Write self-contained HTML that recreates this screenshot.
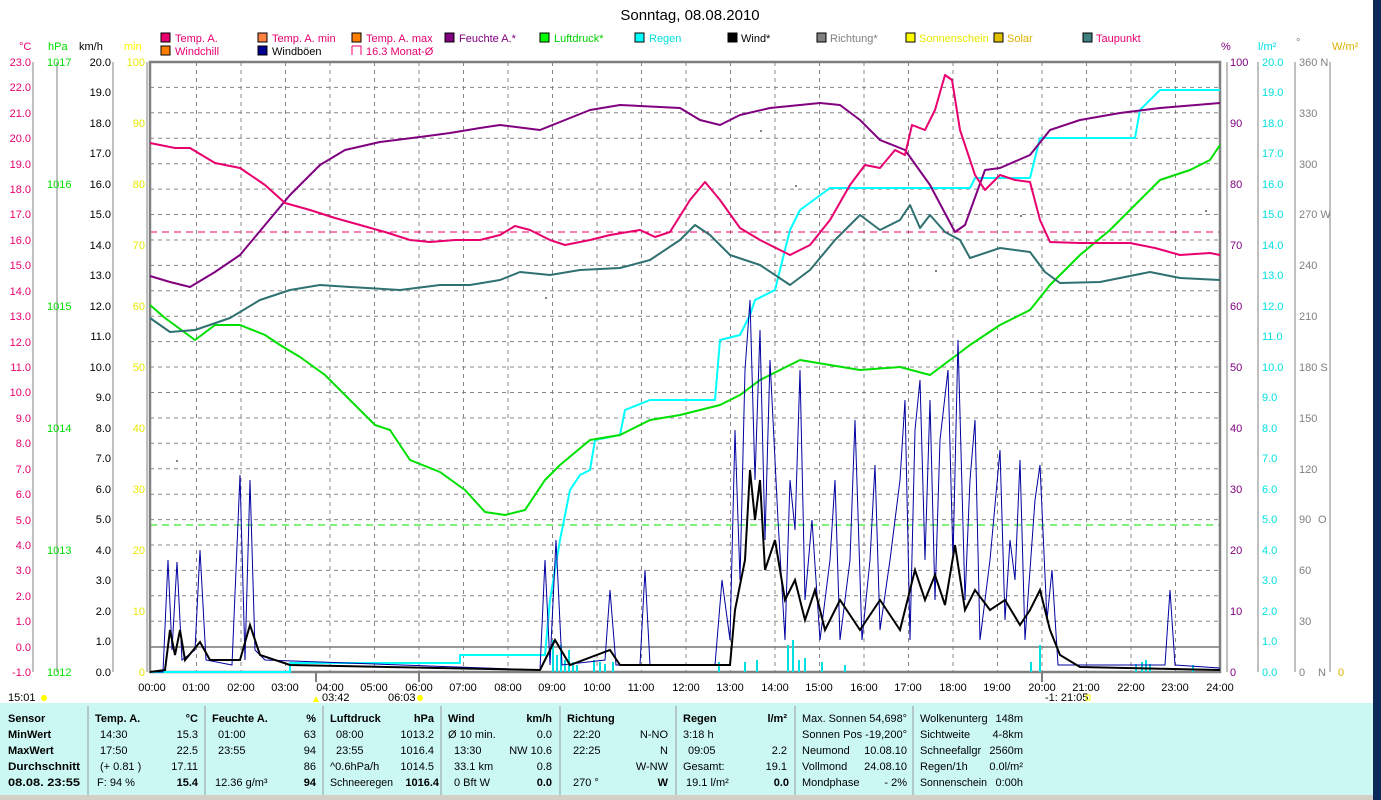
<!DOCTYPE html>
<html><head><meta charset="utf-8"><style>
body{margin:0;width:1381px;height:800px;overflow:hidden;background:#fff;font-family:"Liberation Sans",sans-serif}
svg{position:absolute;left:0;top:0}
</style></head><body>
<svg width="1381" height="800" viewBox="0 0 1381 800" font-family="Liberation Sans, sans-serif" font-size="11">
<rect x="1373" y="0" width="8" height="800" fill="#0b2a5a"/>
<text x="690" y="20" font-size="15" text-anchor="middle">Sonntag, 08.08.2010</text>
<g font-size="11">
<rect x="161" y="33" width="9" height="9" fill="#e8006e" stroke="#000"/><text x="175" y="42" fill="#e8006e">Temp. A.</text>
<rect x="161" y="46" width="9" height="9" fill="#ff8000" stroke="#000"/><text x="175" y="55" fill="#e8006e">Windchill</text>
<rect x="258" y="33" width="9" height="9" fill="#ff8040" stroke="#000"/><text x="272" y="42" fill="#e8006e">Temp. A. min</text>
<rect x="258" y="46" width="9" height="9" fill="#000090" stroke="#000"/><text x="272" y="55">Windböen</text>
<rect x="352" y="33" width="9" height="9" fill="#ff8000" stroke="#000"/><text x="366" y="42" fill="#e8006e">Temp. A. max</text>
<path d="M352 46v9M352 46h9v9" stroke="#e8006e" fill="none"/><text x="366" y="55" fill="#e8006e">16.3 Monat-Ø</text>
<rect x="445" y="33" width="9" height="9" fill="#800080" stroke="#000"/><text x="459" y="42" fill="#800080">Feuchte A.*</text>
<rect x="540" y="33" width="9" height="9" fill="#00ff00" stroke="#000"/><text x="554" y="42" fill="#00d000">Luftdruck*</text>
<rect x="635" y="33" width="9" height="9" fill="#00ffff" stroke="#000"/><text x="649" y="42" fill="#00e0e0">Regen</text>
<rect x="728" y="33" width="9" height="9" fill="#000" stroke="#000"/><text x="741" y="42">Wind*</text>
<rect x="817" y="33" width="9" height="9" fill="#808080" stroke="#000"/><text x="830" y="42" fill="#808080">Richtung*</text>
<rect x="906" y="33" width="9" height="9" fill="#ffff00" stroke="#000"/><text x="919" y="42" fill="#e8e800">Sonnenschein</text>
<rect x="994" y="33" width="9" height="9" fill="#e0c000" stroke="#000"/><text x="1007" y="42" fill="#e0b000">Solar</text>
<rect x="1083" y="33" width="9" height="9" fill="#408080" stroke="#000"/><text x="1096" y="42" fill="#e8006e">Taupunkt</text>
</g>
<text x="19" y="50" fill="#e8006e">°C</text><text x="48" y="50" fill="#00e000">hPa</text><text x="79" y="50">km/h</text><text x="124" y="50" fill="#ffff00">min</text>
<text x="1221" y="50" fill="#800080">%</text><text x="1258" y="50" fill="#00e0e0">l/m²</text><text x="1296" y="46" fill="#808080">°</text><text x="1332" y="50" fill="#e0b000">W/m²</text>
<g stroke="#888" stroke-dasharray="4,4" stroke-width="1">
<path d="M150 87.4H1220M150 112.8H1220M150 138.3H1220M150 163.7H1220M150 189.1H1220M150 214.5H1220M150 240H1220M150 265.4H1220M150 290.8H1220M150 316.2H1220M150 341.6H1220M150 367H1220M150 392.5H1220M150 418H1220M150 443.3H1220M150 468.7H1220M150 494.2H1220M150 519.6H1220M150 545H1220M150 570.4H1220M150 595.8H1220M150 621.3H1220"/>
<path d="M196.5 62V672M241 62V672M285.5 62V672M330 62V672M374.5 62V672M419 62V672M463.5 62V672M508 62V672M552.5 62V672M597 62V672M641.5 62V672M686 62V672M730.5 62V672M775 62V672M819.5 62V672M864 62V672M908.5 62V672M953 62V672M997.5 62V672M1042 62V672M1086.5 62V672M1131 62V672M1175.5 62V672"/>
</g>
<path d="M150 647H1220" stroke="#777" stroke-width="1.5"/>
<path d="M150 232H1220" stroke="#e8006e" stroke-dasharray="7,5"/>
<path d="M150 525H1220" stroke="#00e000" stroke-dasharray="7,5"/>
<rect x="150" y="62" width="1070" height="610" fill="none" stroke="#808080" stroke-width="2.5"/>
<g stroke="#808080" fill="none">
<path d="M33 62V672M57 62V672M113 62V672M147 62V672M1227 62V672M1258 62V672M1295 62V672M1330 62V672"/>
</g>
<g fill="#e8006e" text-anchor="end">
<text x="31" y="66">23.0</text><text x="31" y="91">22.0</text><text x="31" y="117">21.0</text><text x="31" y="142">20.0</text><text x="31" y="168">19.0</text><text x="31" y="193">18.0</text><text x="31" y="218">17.0</text><text x="31" y="244">16.0</text><text x="31" y="269">15.0</text><text x="31" y="295">14.0</text><text x="31" y="320">13.0</text><text x="31" y="346">12.0</text><text x="31" y="371">11.0</text><text x="31" y="396">10.0</text><text x="31" y="422">9.0</text><text x="31" y="447">8.0</text><text x="31" y="473">7.0</text><text x="31" y="498">6.0</text><text x="31" y="524">5.0</text><text x="31" y="549">4.0</text><text x="31" y="574">3.0</text><text x="31" y="600">2.0</text><text x="31" y="625">1.0</text><text x="31" y="651">0.0</text><text x="31" y="676">-1.0</text>
</g>
<g fill="#00e000">
<text x="47" y="66">1017</text><text x="47" y="188">1016</text><text x="47" y="310">1015</text><text x="47" y="432">1014</text><text x="47" y="554">1013</text><text x="47" y="676">1012</text>
</g>
<g text-anchor="end">
<text x="111" y="66">20.0</text><text x="111" y="96">19.0</text><text x="111" y="127">18.0</text><text x="111" y="157">17.0</text><text x="111" y="188">16.0</text><text x="111" y="218">15.0</text><text x="111" y="249">14.0</text><text x="111" y="279">13.0</text><text x="111" y="310">12.0</text><text x="111" y="340">11.0</text><text x="111" y="371">10.0</text><text x="111" y="401">9.0</text><text x="111" y="432">8.0</text><text x="111" y="462">7.0</text><text x="111" y="493">6.0</text><text x="111" y="523">5.0</text><text x="111" y="554">4.0</text><text x="111" y="584">3.0</text><text x="111" y="615">2.0</text><text x="111" y="645">1.0</text><text x="111" y="676">0.0</text>
</g>
<g fill="#e8e800" text-anchor="end">
<text x="145" y="66">100</text><text x="145" y="127">90</text><text x="145" y="188">80</text><text x="145" y="249">70</text><text x="145" y="310">60</text><text x="145" y="371">50</text><text x="145" y="432">40</text><text x="145" y="493">30</text><text x="145" y="554">20</text><text x="145" y="615">10</text><text x="145" y="676">0</text>
</g>
<g fill="#800080">
<text x="1230" y="66">100</text><text x="1230" y="127">90</text><text x="1230" y="188">80</text><text x="1230" y="249">70</text><text x="1230" y="310">60</text><text x="1230" y="371">50</text><text x="1230" y="432">40</text><text x="1230" y="493">30</text><text x="1230" y="554">20</text><text x="1230" y="615">10</text><text x="1230" y="676">0</text>
</g>
<g fill="#00e0e0">
<text x="1262" y="66">20.0</text><text x="1262" y="96">19.0</text><text x="1262" y="127">18.0</text><text x="1262" y="157">17.0</text><text x="1262" y="188">16.0</text><text x="1262" y="218">15.0</text><text x="1262" y="249">14.0</text><text x="1262" y="279">13.0</text><text x="1262" y="310">12.0</text><text x="1262" y="340">11.0</text><text x="1262" y="371">10.0</text><text x="1262" y="401">9.0</text><text x="1262" y="432">8.0</text><text x="1262" y="462">7.0</text><text x="1262" y="493">6.0</text><text x="1262" y="523">5.0</text><text x="1262" y="554">4.0</text><text x="1262" y="584">3.0</text><text x="1262" y="615">2.0</text><text x="1262" y="645">1.0</text><text x="1262" y="676">0.0</text>
</g>
<g fill="#808080">
<text x="1299" y="66">360 N</text><text x="1299" y="117">330</text><text x="1299" y="168">300</text><text x="1299" y="218">270 W</text><text x="1299" y="269">240</text><text x="1299" y="320">210</text><text x="1299" y="371">180 S</text><text x="1299" y="422">150</text><text x="1299" y="473">120</text><text x="1299" y="523">90</text><text x="1318" y="523">O</text><text x="1299" y="574">60</text><text x="1299" y="625">30</text><text x="1299" y="676">0</text><text x="1318" y="676">N</text>
</g>
<text x="1338" y="676" fill="#e0b000">0</text>
<g stroke="#00e0e0" stroke-width="2">
<path d="M553 672V640M557 672V655M561 672V645M565 672V660M569 672V650M573 672V662M577 672V665M594 672V660M600 672V662M605 672V664M613 672V662M719 672V662M745 672V662M757 672V660M788 672V645M793 672V640M799 672V660M805 672V658M822 672V662M845 672V665M1031 672V662M1040 672V645M1136 672V664M1142 672V662M1146 672V660M1150 672V664M1193 672V665"/>
</g>
<g fill="none" stroke-width="2" stroke-linejoin="round">
<polyline stroke="#00ffff" points="150,672 290,672 290,663 460,663 460,655 545,655 550,600 560,540 570,490 580,475 590,470 595,440 620,435 625,410 650,400 715,400 720,340 740,335 750,315 755,300 775,290 790,230 800,210 830,188 970,188 975,178 1030,178 1040,138 1135,138 1140,110 1160,90 1220,90"/>
<polyline stroke="#00e000" points="150,305 165,318 195,340 215,325 240,325 265,335 280,345 300,357 325,375 350,400 375,425 390,430 410,460 440,472 465,490 485,512 505,515 525,510 545,480 560,465 590,440 620,435 650,420 680,415 700,410 720,405 740,395 760,380 780,370 800,360 830,365 860,370 900,367 930,375 950,360 970,345 1000,325 1030,310 1050,285 1080,255 1110,230 1140,200 1160,180 1190,170 1210,160 1220,145"/>
<polyline stroke="#800080" points="150,276 170,282 190,287 215,272 240,255 265,225 290,195 320,165 345,150 380,142 420,137 450,133 480,128 500,125 540,130 560,122 590,110 620,105 680,108 700,120 720,125 740,115 770,108 820,103 840,105 860,120 880,140 905,150 930,185 955,232 965,225 985,170 1000,168 1030,155 1050,130 1080,120 1120,113 1160,108 1220,103"/>
<polyline stroke="#2f7070" points="150,318 170,332 195,330 230,318 260,300 290,290 320,285 350,287 400,290 440,285 470,285 500,280 520,272 550,275 580,270 620,268 650,260 680,240 695,225 710,235 730,255 760,265 790,285 810,270 835,240 860,215 880,230 900,220 910,205 920,228 930,215 945,232 960,240 970,258 1000,248 1030,252 1045,272 1060,283 1100,282 1150,272 1180,278 1220,280"/>
<polyline stroke="#e8006e" points="150,143 175,148 190,148 215,163 240,168 265,185 285,203 310,210 335,218 360,225 385,232 410,240 430,242 455,240 480,240 500,235 515,226 530,230 550,240 565,245 590,240 610,235 640,230 655,237 670,232 690,200 705,182 720,200 740,228 760,240 790,255 810,245 830,220 850,185 865,165 880,168 895,150 905,155 912,125 925,130 935,110 945,75 952,80 960,130 975,175 985,190 1000,175 1015,180 1030,182 1040,220 1050,242 1080,243 1130,243 1155,248 1180,255 1210,253 1220,255"/>
</g>
<g fill="none" stroke-width="1" stroke="#0000a0">
<polyline points="150,672 163,672 168,560 172,650 177,562 182,660 195,650 200,550 206,660 232,665 240,475 245,660 250,480 255,650 265,660 540,670 545,560 550,665 556,540 562,665 605,660 610,590 616,665 640,665 645,570 650,665 715,665 722,580 730,640 735,430 740,580 745,370 750,300 755,480 760,330 765,540 770,360 778,520 785,640 790,480 795,530 800,370 805,600 812,520 820,640 830,560 835,480 840,640 850,560 855,420 862,640 870,560 875,465 880,630 890,560 900,480 905,400 910,640 915,430 920,380 925,560 930,400 935,600 940,440 948,370 953,560 958,340 965,600 970,480 975,420 980,640 990,560 1000,450 1005,620 1010,540 1015,580 1020,460 1025,640 1035,500 1040,465 1047,620 1052,570 1058,665 1165,665 1170,590 1175,665 1220,668"/>
</g>
<g fill="none" stroke-width="2" stroke="#000">
<polyline points="150,672 165,670 170,630 175,655 180,630 185,660 200,642 210,660 240,660 250,625 260,655 290,665 540,670 555,640 570,665 610,650 620,665 730,665 735,610 745,560 750,470 755,520 760,480 765,570 775,540 785,600 795,580 805,620 815,590 825,630 840,600 860,630 880,600 900,630 915,570 925,600 935,575 945,605 955,545 965,610 975,590 990,610 1005,600 1020,625 1030,610 1040,590 1050,630 1060,655 1080,667 1220,670"/>
</g>
<g fill="#808080"><rect x="176" y="460" width="2" height="2"/><rect x="545" y="297" width="2" height="2"/><rect x="760" y="130" width="2" height="2"/><rect x="795" y="185" width="2" height="2"/><rect x="935" y="270" width="2" height="2"/><rect x="1020" y="215" width="2" height="2"/><rect x="1205" y="210" width="2" height="2"/></g>
<g text-anchor="middle">
<text x="152" y="691">00:00</text><text x="196" y="691">01:00</text><text x="241" y="691">02:00</text><text x="285" y="691">03:00</text><text x="330" y="691">04:00</text><text x="374" y="691">05:00</text><text x="419" y="691">06:00</text><text x="463" y="691">07:00</text><text x="508" y="691">08:00</text><text x="552" y="691">09:00</text><text x="597" y="691">10:00</text><text x="641" y="691">11:00</text><text x="686" y="691">12:00</text><text x="730" y="691">13:00</text><text x="775" y="691">14:00</text><text x="819" y="691">15:00</text><text x="864" y="691">16:00</text><text x="908" y="691">17:00</text><text x="953" y="691">18:00</text><text x="997" y="691">19:00</text><text x="1042" y="691">20:00</text><text x="1086" y="691">21:00</text><text x="1131" y="691">22:00</text><text x="1175" y="691">23:00</text><text x="1220" y="691">24:00</text>
</g>
<path d="M316 672V682M419 672V682M1042 672V682" stroke="#808080" stroke-width="2"/>
<text x="8" y="701">15:01</text><circle cx="44" cy="698" r="3" fill="#ff0"/>
<text x="322" y="701">03:42</text><path d="M316 696l-3 6h6z" fill="#ff0"/>
<text x="388" y="701">06:03</text><circle cx="420" cy="698" r="3" fill="#ff0"/>
<text x="1045" y="701">-1: 21:05</text><rect x="1086" y="695" width="4" height="5" fill="none" stroke="#ff0"/>
<rect x="0" y="703" width="1373" height="92" fill="#ccf8f4"/>
<rect x="0" y="795" width="1373" height="5" fill="#d4d0c8"/>
<g stroke="#999"><path d="M88 706V795M205 706V795M323 706V795M441 706V795M560 706V795M676 706V795M795 706V795M913 706V795"/></g>
<g font-size="11">
<g font-weight="bold"><text x="8" y="722">Sensor</text><text x="8" y="738">MinWert</text><text x="8" y="754">MaxWert</text><text x="8" y="770" textLength="72" lengthAdjust="spacingAndGlyphs">Durchschnitt</text><text x="8" y="786" textLength="72" lengthAdjust="spacingAndGlyphs">08.08. 23:55</text>
<text x="95" y="722">Temp. A.</text><text x="212" y="722">Feuchte A.</text><text x="330" y="722">Luftdruck</text><text x="448" y="722">Wind</text><text x="567" y="722">Richtung</text><text x="683" y="722">Regen</text></g>
<g text-anchor="end" font-weight="bold"><text x="198" y="722">°C</text><text x="316" y="722">%</text><text x="434" y="722">hPa</text><text x="552" y="722">km/h</text><text x="787" y="722">l/m²</text>
<text x="198" y="786">15.4</text><text x="316" y="786">94</text><text x="552" y="786">0.0</text><text x="668" y="786">W</text><text x="789" y="786">0.0</text><text x="439" y="786">1016.4</text></g>
<text x="100" y="738">14:30</text><text x="100" y="754">17:50</text><text x="100" y="770">(+ 0.81 )</text><text x="97" y="786">F: 94 %</text>
<g text-anchor="end"><text x="198" y="738">15.3</text><text x="198" y="754">22.5</text><text x="198" y="770">17.11</text>
<text x="316" y="738">63</text><text x="316" y="754">94</text><text x="316" y="770">86</text>
<text x="434" y="738">1013.2</text><text x="434" y="754">1016.4</text><text x="434" y="770">1014.5</text>
<text x="552" y="738">0.0</text><text x="552" y="754">NW 10.6</text><text x="552" y="770">0.8</text>
<text x="668" y="738">N-NO</text><text x="668" y="754">N</text><text x="668" y="770">W-NW</text>
<text x="787" y="754">2.2</text><text x="787" y="770">19.1</text></g>
<text x="218" y="738">01:00</text><text x="218" y="754">23:55</text><text x="215" y="786">12.36 g/m³</text>
<text x="336" y="738">08:00</text><text x="336" y="754">23:55</text><text x="330" y="770">^0.6hPa/h</text><text x="330" y="786" textLength="63" lengthAdjust="spacingAndGlyphs">Schneeregen</text>
<text x="448" y="738">Ø 10 min.</text><text x="454" y="754">13:30</text><text x="454" y="770">33.1 km</text><text x="454" y="786">0 Bft W</text>
<text x="573" y="738">22:20</text><text x="573" y="754">22:25</text><text x="573" y="786">270 °</text>
<text x="683" y="738">3:18 h</text><text x="688" y="754">09:05</text><text x="683" y="770">Gesamt:</text><text x="686" y="786">19.1 l/m²</text>
<text x="802" y="722" textLength="105" lengthAdjust="spacingAndGlyphs">Max. Sonnen 54,698°</text><text x="802" y="738" textLength="105" lengthAdjust="spacingAndGlyphs">Sonnen Pos  -19,200°</text><text x="802" y="754">Neumond</text><text x="802" y="770">Vollmond</text><text x="802" y="786">Mondphase</text>
<g text-anchor="end"><text x="907" y="754">10.08.10</text><text x="907" y="770">24.08.10</text><text x="907" y="786">- 2%</text></g>
<text x="920" y="722">Wolkenunterg</text><text x="920" y="738">Sichtweite</text><text x="920" y="754">Schneefallgr</text><text x="920" y="770">Regen/1h</text><text x="920" y="786" textLength="67" lengthAdjust="spacingAndGlyphs">Sonnenschein</text>
<g text-anchor="end"><text x="1023" y="722">148m</text><text x="1023" y="738">4-8km</text><text x="1023" y="754">2560m</text><text x="1023" y="770">0.0l/m²</text><text x="1023" y="786">0:00h</text></g>
</g>
</svg>
</body></html>
